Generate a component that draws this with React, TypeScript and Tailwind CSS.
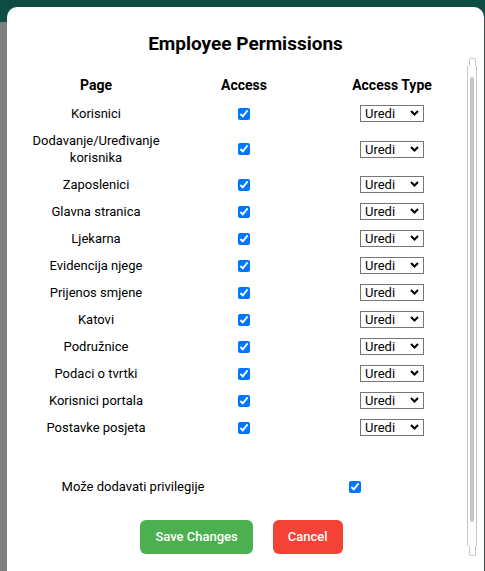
import React from "react";

const pages: { name: string; tall?: boolean }[] = [
  { name: "Korisnici" },
  { name: "Dodavanje/Uređivanje korisnika", tall: true },
  { name: "Zaposlenici" },
  { name: "Glavna stranica" },
  { name: "Ljekarna" },
  { name: "Evidencija njege" },
  { name: "Prijenos smjene" },
  { name: "Katovi" },
  { name: "Podružnice" },
  { name: "Podaci o tvrtki" },
  { name: "Korisnici portala" },
  { name: "Postavke posjeta" },
];

const AccessSelect = () => (
  <div className="relative h-[17px] w-[64px]">
    <select
      defaultValue="edit"
      className="h-[17px] w-[64px] appearance-none border border-[#767676] bg-white pl-[4px] text-[13px] leading-[15px] text-black"
    >
      <option value="edit">Uredi</option>
      <option value="view">Pregled</option>
    </select>
    <svg
      className="pointer-events-none absolute right-[5px] top-[5px]"
      width="9"
      height="6"
      viewBox="0 0 9 6"
    >
      <path d="M1 1l3.5 3.5L8 1" fill="none" stroke="#000" strokeWidth="2" />
    </svg>
  </div>
);

const Check = () => (
  <input type="checkbox" defaultChecked className="h-[12px] w-[12px]" />
);

export default function App() {
  return (
    <div className="relative h-[571px] w-[485px] overflow-hidden bg-[linear-gradient(to_bottom,#0d4b42_0px,#0f5147_22px,#7b807e_22px)] font-['Roboto',sans-serif] text-black">
      {/* MODAL */}
      <div className="relative ml-[7px] mt-[7px] h-[600px] w-[477px] rounded-[10px] bg-white">
        <h2 className="pt-[25px] text-center text-[19px] font-bold leading-[24px]">
          Employee Permissions
        </h2>

        {/* TABLE */}
        <div className="mx-[15px] mt-[15px] w-[444px] text-[13px] leading-[17px]">
          <div className="grid h-[29px] grid-cols-3 items-center text-center text-[14px] font-bold">
            <div>Page</div>
            <div>Access</div>
            <div>Access Type</div>
          </div>
          {pages.map((p) => (
            <div
              key={p.name}
              className={`grid grid-cols-3 items-center text-center ${
                p.tall ? "h-[44px]" : "h-[27px]"
              }`}
            >
              <div className="px-[8px]">{p.name}</div>
              <div className="flex justify-center">
                <Check />
              </div>
              <div className="flex justify-center">
                <AccessSelect />
              </div>
            </div>
          ))}
        </div>

        {/* PRIVILEGES */}
        <div className="mx-[15px] mt-[32px] grid h-[27px] w-[444px] grid-cols-2 items-center text-center text-[13px]">
          <div>Može dodavati privilegije</div>
          <div className="flex justify-center">
            <Check />
          </div>
        </div>

        {/* ACTIONS */}
        <div className="mt-[20px] flex justify-center gap-[20px] pr-[8px]">
          <button className="h-[34px] rounded-[6px] bg-[#4caf50] px-[15px] text-[13px] font-medium text-white">
            Save Changes
          </button>
          <button className="h-[34px] rounded-[6px] bg-[#f44336] px-[15px] text-[13px] font-medium text-white">
            Cancel
          </button>
        </div>

        {/* SCROLLBAR */}
        <div className="absolute left-[460px] top-[51px] flex h-[498px] w-[10px] flex-col items-center">
          <div className="h-[8px] w-[7px] rounded-t-[2px] border border-b-0 border-[#c8c8c8]" />
          <div className="flex w-[10px] flex-1 justify-center border-x border-[#c8c8c8] pt-[11px] pb-[24px]">
            <div className="w-[4px] rounded-full bg-[#c6c6c6]" />
          </div>
          <div className="h-[10px] w-[7px] rounded-b-[2px] border border-t-0 border-[#c8c8c8]" />
        </div>
      </div>
      <div className="absolute right-0 top-[18px] h-[553px] w-[1px] bg-[#3f4a47]" />
    </div>
  );
}
